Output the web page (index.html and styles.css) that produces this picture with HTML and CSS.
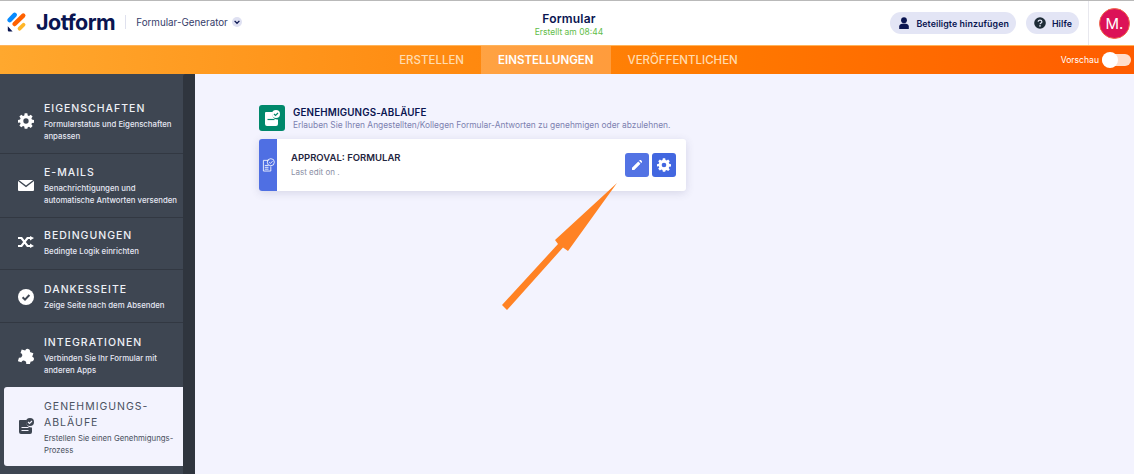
FILE: index.html
```html
<!DOCTYPE html>
<html lang="de">
<head>
<meta charset="UTF-8">
<meta name="viewport" content="width=device-width, initial-scale=1.0">
<title>Jotform Formular-Generator</title>
<link rel="stylesheet" href="styles.css">
</head>
<body>
<header class="topbar">
  <div class="brand">
    <svg class="logo" viewBox="0 0 20 20" width="20" height="20">
      <path d="M1 6.600 6 1.200a2.300 2.300 0 0 1 3.300 3.200L4.300 9.800A2.300 2.300 0 0 1 1 6.600z" fill="#0a8cff"/>
      <path d="M6 10.400 14.700 2a2.200 2.200 0 0 1 3.100 3.200L9.200 13.600A2.200 2.200 0 0 1 6 10.400z" fill="#ff6100"/>
      <path d="M11.200 15.300 15.200 11.400a1.900 1.900 0 0 1 2.700 2.700L13.900 18a1.900 1.900 0 0 1-2.700-2.700z" fill="#ffb629"/>
      <path d="M.8 14.200 5.600 19.400H2a1.200 1.200 0 0 1-1.200-1.200z" fill="#0a1551"/>
    </svg>
    <span class="wordmark">Jotform</span>
    <span class="brand-sep"></span>
    <span class="brand-sub">Formular-Generator</span>
    <span class="brand-chevron">
      <svg viewBox="0 0 10 10" width="8" height="8"><path d="M2 3.600 5 6.600 8 3.600" fill="none" stroke="#0a1551" stroke-width="1.600"/></svg>
    </span>
  </div>
  <div class="form-title">
    <div class="form-name">Formular</div>
    <div class="form-saved">Erstellt am 08:44</div>
  </div>
  <div class="top-actions">
    <button class="pill">
      <svg viewBox="0 0 12 12" width="12" height="12"><circle cx="6" cy="3.200" r="2.900" fill="#0a1551"/><path d="M1.200 12V9.600C1.200 7.800 3 6.600 6 6.600s4.800 1.200 4.800 3V12z" fill="#0a1551"/></svg>
      Beteiligte hinzufügen
    </button>
    <button class="pill">
      <svg viewBox="0 0 12 12" width="12" height="12"><circle cx="6" cy="6" r="5.800" fill="#1d2b36"/><path d="M4.200 4.700C4.200 3.700 5 3.100 6 3.100s1.900.6 1.900 1.600C7.900 6 6.100 6 6.100 7.200" fill="none" stroke="#e3e5f5" stroke-width="1.200"/><circle cx="6" cy="8.900" r=".8" fill="#e3e5f5"/></svg>
      Hilfe
    </button>
    <div class="avatar-cell"><span class="avatar">M.</span></div>
  </div>
</header>

<nav class="tabs">
  <a class="tab">ERSTELLEN</a>
  <a class="tab tab-active">EINSTELLUNGEN</a>
  <a class="tab">VERÖFFENTLICHEN</a>
  <div class="preview">
    <span>Vorschau</span>
    <span class="switch"><span class="knob"></span></span>
  </div>
</nav>

<div class="workspace">
  <aside class="sidebar">
    <div class="side-list">
      <a class="side-item item-props">
        <svg class="side-icon" viewBox="0 0 24 24" width="16" height="16"><path fill="#fff" d="M10 1h4l.6 3.100 1.900.8L19.100 3.100l2.800 2.800-1.800 2.600.8 1.900L24 11v4l-3.100.6-.8 1.900 1.800 2.600-2.800 2.800-2.600-1.800-1.900.8L14 24h-4l-.6-3.100-1.900-.8-2.600 1.800-2.800-2.800 1.800-2.600-.8-1.900L0 15v-4l3.100-.6.8-1.900-1.800-2.600 2.800-2.800 2.600 1.800 1.900-.8zM12 8.500a4 4 0 1 0 0 8 4 4 0 0 0 0-8z" transform="translate(0 -.5)"/></svg>
        <div class="side-text">
          <h4>EIGENSCHAFTEN</h4>
          <p>Formularstatus und Eigenschaften anpassen</p>
        </div>
      </a>
      <a class="side-item item-mail">
        <svg class="side-icon" viewBox="0 0 16 11" width="16" height="11"><path fill="#fff" d="M.8 0h14.400L8 5.600zM0 1l8 6.200L16 1v9a1 1 0 0 1-1 1H1a1 1 0 0 1-1-1z"/></svg>
        <div class="side-text">
          <h4>E-MAILS</h4>
          <p>Benachrichtigungen und automatische Antworten versenden</p>
        </div>
      </a>
      <a class="side-item item-cond">
        <svg class="side-icon" viewBox="0 0 16 12" width="16" height="12"><path fill="none" stroke="#fff" stroke-width="2.200" d="M0 2h3.500l6 8H13M0 10h3.500l6-8H13"/><path fill="#fff" d="M12 0l4 2-4 2.500zM12 7.500l4 2.500-4 2z"/></svg>
        <div class="side-text">
          <h4>BEDINGUNGEN</h4>
          <p>Bedingte Logik einrichten</p>
        </div>
      </a>
      <a class="side-item item-thanks">
        <svg class="side-icon" viewBox="0 0 16 16" width="16" height="16"><circle cx="8" cy="8" r="8" fill="#fff"/><path d="M4.600 8.200 7 10.600l4.400-4.600" fill="none" stroke="#3e4652" stroke-width="2"/></svg>
        <div class="side-text">
          <h4>DANKESSEITE</h4>
          <p>Zeige Seite nach dem Absenden</p>
        </div>
      </a>
      <a class="side-item item-integ">
        <svg class="side-icon" viewBox="1.500 1.500 13 13" width="16" height="16"><path fill="#fff" transform="rotate(18 8 8)" d="M3 4H6a2 2 0 1 1 4 0H13V7a2 2 0 1 1 0 4V14H10a2 2 0 1 0-4 0H3V11a2 2 0 1 0 0-4z"/></svg>
        <div class="side-text">
          <h4>INTEGRATIONEN</h4>
          <p>Verbinden Sie Ihr Formular mit anderen Apps</p>
        </div>
      </a>
      <a class="side-item item-approval">
        <svg class="side-icon" viewBox="0 0 16 16" width="16" height="16"><path fill="#3e4652" d="M1.500 2H9a5 5 0 0 0 5 7.500V14a2 2 0 0 1-2 2H3a2 2 0 0 1-2-2V3z"/><path stroke="#f3f3fe" stroke-width="1.200" d="M3.500 9.500h7M3.500 12.500h7"/><circle cx="12" cy="4" r="4" fill="#3e4652"/><path d="M10 4l1.500 1.500L14 3" fill="none" stroke="#f3f3fe" stroke-width="1.100"/></svg>
        <div class="side-text">
          <h4>GENEHMIGUNGS-ABLÄUFE</h4>
          <p>Erstellen Sie einen Genehmigungs-Prozess</p>
        </div>
      </a>
    </div>
    <div class="side-strip"></div>
  </aside>

  <main class="content">
    <section class="panel">
      <div class="panel-head">
        <span class="panel-icon">
          <svg viewBox="0 0 16 16" width="16" height="16"><path fill="#fff" d="M1.500 2H9a5 5 0 0 0 5 7.500V14a2 2 0 0 1-2 2H3a2 2 0 0 1-2-2V3z"/><path stroke="#00886b" stroke-width="1.200" d="M3.500 9.500h7"/><circle cx="12" cy="4" r="4" fill="#fff"/><path d="M10 4l1.500 1.500L14 3" fill="none" stroke="#00886b" stroke-width="1.200"/></svg>
        </span>
        <div>
          <h3>GENEHMIGUNGS-ABLÄUFE</h3>
          <p>Erlauben Sie Ihren Angestellten/Kollegen Formular-Antworten zu genehmigen oder abzulehnen.</p>
        </div>
      </div>
      <div class="flow-card">
        <div class="flow-tag">
          <svg viewBox="0 0 14 15" width="13" height="14"><path fill="none" stroke="#fff" stroke-width=".9" d="M7 2.500H1.500v11.500h8V9M3 8h4M3 10h4M3 12h4"/><circle cx="9.500" cy="4.500" r="3.800" fill="none" stroke="#fff" stroke-width=".9"/><path d="M7.800 4.500l1.300 1.300 2.200-2.400" fill="none" stroke="#fff" stroke-width=".9"/></svg>
        </div>
        <div class="flow-body">
          <div class="flow-name">APPROVAL: FORMULAR</div>
          <div class="flow-meta">Last edit on .</div>
        </div>
        <div class="flow-actions">
          <button class="icon-btn btn-edit">
            <svg viewBox="0 0 12 12" width="10" height="10"><path fill="#fff" d="M0 12V9.300L7.500 1.800l2.700 2.700L2.700 12zM8.500.8 9.300 0a1 1 0 0 1 1.300 0l1.400 1.400a1 1 0 0 1 0 1.300l-.8.800z"/></svg>
          </button>
          <button class="icon-btn btn-gear">
            <svg viewBox="0 0 24 24" width="14" height="14"><path fill="#fff" d="M10 1h4l.6 3.100 1.900.8L19.100 3.100l2.800 2.800-1.800 2.600.8 1.900L24 11v4l-3.100.6-.8 1.900 1.800 2.600-2.800 2.800-2.600-1.800-1.900.8L14 24h-4l-.6-3.100-1.900-.8-2.600 1.800-2.800-2.800 1.800-2.600-.8-1.900L0 15v-4l3.100-.6.8-1.900-1.800-2.600 2.800-2.800 2.600 1.800 1.900-.8zM12 8.500a4 4 0 1 0 0 8 4 4 0 0 0 0-8z" transform="translate(0 -.5)"/></svg>
          </button>
        </div>
      </div>
    </section>
  </main>
</div>

<!-- annotation drawn over the screenshot -->
<svg class="arrow" viewBox="0 0 130 135" width="130" height="135">
  <polygon fill="#ff8224" points="119,0 70,68 65,64.500 9,127 4,122 60,61 57,57"/>
</svg>
</body>
</html>
```

FILE: styles.css
```css
* {
  box-sizing: border-box;
}
html, body {
  height: 100%;
}
body {
  margin: 0;
  height: 474px;
  overflow: hidden;
  position: relative;
  display: flex;
  flex-direction: column;
  background: #f3f3fe;
  font-family: Inter, "Noto Sans", sans-serif;
  color: #0a1551;
}
h3, h4, p {
  margin: 0;
}
button {
  font-family: inherit;
  border: 0;
}

/* top bar */
.topbar {
  height: 45px;
  flex: none;
  display: grid;
  grid-template-columns: 1fr auto 1fr;
  align-items: center;
  background: #fff;
  border-top: 1px solid #b9b9b9;
}
.brand {
  display: flex;
  align-items: center;
  padding: 0 0 2px 7px;
}
.logo {
  margin-right: 9px;
}
.wordmark {
  font-family: Inter, sans-serif;
  font-size: 21.500px;
  font-weight: 700;
  letter-spacing: -0.5px;
  color: #0a1551;
}
.brand-sep {
  width: 1px;
  height: 14px;
  margin: 0 10px;
  background: #dfe1ee;
}
.brand-sub {
  font-size: 9.800px;
  color: #343c6a;
}
.brand-chevron {
  width: 10px;
  height: 10px;
  margin-left: 4px;
  border-radius: 50%;
  background: #dfe1f2;
  display: flex;
  align-items: center;
  justify-content: center;
}
.form-title {
  text-align: center;
  padding: 2px 0 0 4px;
}
.form-name {
  font-size: 12px;
  font-weight: 600;
  line-height: 15px;
  letter-spacing: 0.2px;
}
.form-saved {
  font-size: 8.500px;
  line-height: 12px;
  color: #62bd4a;
}
.top-actions {
  display: flex;
  align-items: center;
  justify-content: flex-end;
  gap: 10px;
  height: 100%;
}
.pill {
  height: 22px;
  padding: 0 7px 0 8px;
  display: flex;
  align-items: center;
  gap: 6px;
  border-radius: 11px;
  background: #e3e5f5;
  color: #0a1551;
  font-size: 8.800px;
  font-weight: 600;
  letter-spacing: 0.1px;
}
.avatar-cell {
  height: 100%;
  width: 46px;
  margin-left: -1px;
  padding-right: 4px;
  border-left: 1px solid #e8e8ee;
  display: flex;
  align-items: center;
  justify-content: flex-end;
}
.avatar {
  width: 31px;
  height: 31px;
  border-radius: 50%;
  background: #dc1257;
  border: 1px solid #f06a4a;
  color: #fff;
  font-size: 15px;
  display: flex;
  align-items: center;
  justify-content: center;
}

/* orange tab bar */
.tabs {
  position: relative;
  height: 29px;
  flex: none;
  display: flex;
  justify-content: center;
  background: linear-gradient(90deg, #ffa82e 0%, #ff7a00 62%, #ff5c00 100%);
  border-top: 1px solid #ffb45a;
  padding-left: 3px;
}
.tab {
  display: flex;
  align-items: center;
  padding: 0 17px;
  color: #ffdcb0;
  font-size: 11.500px;
  font-weight: 500;
}
.tab-active {
  background: rgba(255, 255, 255, 0.22);
  color: #fff;
  font-weight: 600;
}
.preview {
  position: absolute;
  right: 3px;
  top: 0;
  height: 100%;
  display: flex;
  align-items: center;
  gap: 3px;
  color: #fff;
  font-size: 8.600px;
}
.switch {
  width: 29px;
  height: 12px;
  border-radius: 6px;
  background: rgba(255, 255, 255, 0.8);
  display: block;
  position: relative;
}
.knob {
  position: absolute;
  left: 0;
  top: -2px;
  width: 16px;
  height: 16px;
  border-radius: 50%;
  background: #fff;
}

/* sidebar */
.workspace {
  flex: 1;
  display: flex;
  min-height: 0;
}
.sidebar {
  width: 195px;
  flex: none;
  display: flex;
  background: #3e4652;
}
.side-list {
  width: 183px;
  flex: none;
}
.side-strip {
  flex: 1;
  background: #2f353e;
  border-radius: 3px 0 0 0;
}
.side-item {
  display: flex;
  align-items: center;
  padding: 1px 0 0 18px;
  border-bottom: 1px solid #323842;
  color: #fff;
}
.side-icon {
  flex: none;
  width: 16px;
  margin-right: 10px;
}
.side-text {
  min-width: 0;
}
.side-item h4 {
  font-size: 10.500px;
  font-weight: 500;
  line-height: 16px;
  letter-spacing: 1px;
  color: #eef0f6;
}
.side-item p {
  font-size: 7.800px;
  font-weight: 500;
  line-height: 12px;
  margin-top: 1px;
  color: #e6e8f4;
}
.item-props { height: 80px; padding-top: 15px; }
.item-mail { height: 64px; padding: 0 0 1px 18px; }
.item-cond { height: 52px; padding: 0 0 3px 18px; }
.item-thanks { height: 53px; }
.item-integ { height: 64px; border-bottom: 0; }
.item-approval {
  height: 79px;
  margin-left: 4px;
  padding-left: 14px;
  background: #f3f3fe;
  border-radius: 3px 0 0 3px;
  border-bottom: 0;
}
.item-approval .side-icon {
  margin-bottom: 3px;
}
.item-approval h4 {
  color: #4a5160;
  font-weight: 400;
  line-height: 16px;
}
.item-approval p {
  color: #4a5160;
  font-weight: 400;
}

/* approval panel */
.content {
  flex: 1;
  padding: 31px 0 0 64px;
}
.panel {
  width: 427px;
}
.panel-head {
  display: flex;
  align-items: center;
  gap: 8px;
  height: 26px;
  margin-bottom: 8px;
}
.panel-icon {
  width: 26px;
  height: 26px;
  flex: none;
  border-radius: 3px;
  background: #00886b;
  display: flex;
  align-items: center;
  justify-content: center;
}
.panel-head h3 {
  font-size: 9.800px;
  font-weight: 600;
  line-height: 13px;
  letter-spacing: 0.15px;
  color: #0a1551;
}
.panel-head p {
  font-size: 8.400px;
  line-height: 12px;
  white-space: nowrap;
  color: #7c81b0;
}
.flow-card {
  height: 52px;
  display: flex;
  align-items: center;
  background: #fff;
  border-radius: 3px;
  box-shadow: 0 2px 8px rgba(60, 65, 110, 0.16);
  overflow: hidden;
}
.flow-tag {
  width: 18px;
  height: 100%;
  flex: none;
  background: #4f6fe3;
  display: flex;
  align-items: center;
  justify-content: center;
}
.flow-body {
  flex: 1;
  padding-left: 14px;
}
.flow-name {
  font-size: 9.500px;
  font-weight: 600;
  line-height: 14px;
  color: #1f2540;
}
.flow-meta {
  font-size: 8px;
  line-height: 14px;
  color: #8b8fa5;
}
.flow-actions {
  display: flex;
  gap: 3px;
  padding-right: 10px;
}
.icon-btn {
  width: 24px;
  height: 24px;
  padding: 0;
  border-radius: 3px;
  display: flex;
  align-items: center;
  justify-content: center;
}
.btn-edit {
  background: #5373e4;
}
.btn-gear {
  background: #4267e0;
}

/* arrow annotation */
.arrow {
  position: absolute;
  left: 498px;
  top: 183px;
}
```
